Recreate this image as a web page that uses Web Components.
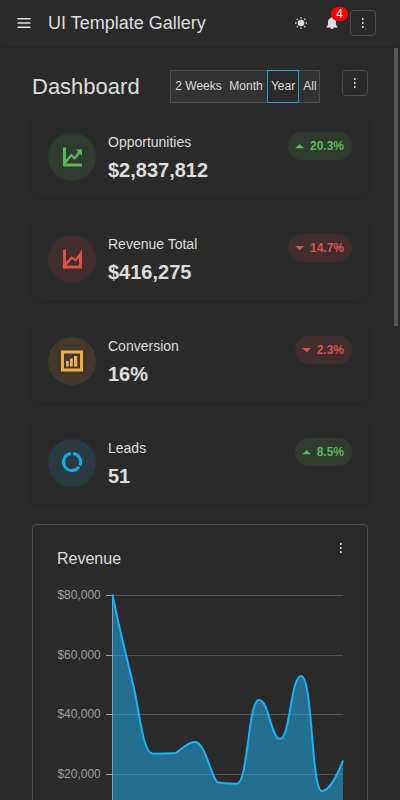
<!DOCTYPE html>
<html lang="en"><head><meta charset="utf-8"><title>UI Template Gallery</title>
<style>
html,body{margin:0;height:800px;overflow:hidden;background:#2a2a2a}
body{font-family:"Liberation Sans",Arial,sans-serif;color:#dedede;font-size:14px}
</style></head><body>
<gallery-app></gallery-app>
<script>
const define=(name,html,setup)=>customElements.define(name,class extends HTMLElement{
  connectedCallback(){
    if(this.shadowRoot)return;
    const root=this.attachShadow({mode:'open'});
    const t=document.createElement('template');
    t.innerHTML=html;
    root.append(t.content.cloneNode(true));
    if(setup)setup(this,root);
  }
});

define('more-button',`<style>
:host{display:flex;box-sizing:border-box;width:26px;height:26px;border:1px solid #4d4d4d;border-radius:4px;align-items:center;justify-content:center}
:host([plain]){border-color:transparent}
svg{display:block}
</style><svg width="2" height="10" fill="#dedede"><path d="M0 0h1v2H0zM0 4h1v2H0zM0 8h1v2H0z"/><path fill-opacity=".55" d="M1 0h1v2H1zM1 4h1v2H1zM1 8h1v2H1z"/></svg>`);

define('app-toolbar',`<style>
:host{display:flex;box-sizing:border-box;height:46px;padding:0 24px 0 17px;align-items:center;box-shadow:0 1px 4px rgba(0,0,0,.18);background:#2a2a2a}
svg{display:block}
h1{margin:0 0 0 17px;font-size:18px;font-weight:400;line-height:24px;flex:1;white-space:nowrap}
.sun{margin-right:17px}
.bell{position:relative;margin-right:11px}
.count{position:absolute;left:6px;top:-9px;width:17px;height:14px;border-radius:7px;background:#f00;color:#fff;font-size:12px;line-height:14px;text-align:center}
</style>
<svg width="14" height="14" fill="#dedede"><path d="M.5 2h13v1.500H.5zM.5 6.200h13v1.500H.5zM.5 10.400h13v1.500H.5z"/></svg>
<h1><slot></slot></h1>
<svg class="sun" width="14" height="14" viewBox="0 0 14 14"><circle cx="7" cy="7" r="3.300" fill="#dedede"/><g stroke="#dedede" stroke-width="1.300"><path d="M7 1v1.400M7 11.600V13M1 7h1.400M11.600 7H13M2.700 2.700l1 1M10.300 10.300l1 1M11.300 2.700l-1 1M3.700 10.300l-1 1"/></g></svg>
<div class="bell"><svg width="14" height="14" viewBox="0 0 14 14"><path fill="#dedede" d="M7 1a1 1 0 0 1 1 1c2 .6 3 2 3 4v3l1.500 1.800v.8h-11v-.8L3 9V6c0-2 1-3.400 3-4a1 1 0 0 1 1-1zM5.400 11h3.200v.4a1.600 1.600 0 0 1-3.200 0z"/></svg><span class="count">4</span></div>
<more-button></more-button>`);

define('period-tabs',`<style>
:host{display:flex;box-sizing:border-box;width:150px;height:33px;background:#323232;border:1px solid #4d4d4d;font-size:12px;line-height:31px}
span{text-align:center;white-space:nowrap}
.w{width:55px}.m{width:40px;padding-right:1px}.a{flex:1;padding-left:2px}
.y{box-sizing:border-box;width:32px;margin:-1px 0;border:1px solid #1ca8dd;background:#2a2a2a}
</style><span class="w">2 Weeks</span><span class="m">Month</span><span class="y">Year</span><span class="a">All</span>`);

const icons={
up:'<path d="M3 2.500h3v16h16v3H3zM22 4.500v6.200l-2-2-5.200 6.200-3.400-3.200L6 18.500v-3.800l5.300-6.200 3.300 3.200 3.500-4.900-2.300-2.300z"/>',
down:'<path fill-rule="evenodd" d="M3 2.500v19h19v-19l-6.500 9.300-4-2.600L6 15V2.500zM6.500 18.500l5.500-6.500 4 3 3-4.300v7.800z"/>',
bars:'<path fill-rule="evenodd" d="M1 1.500h22v21H1zM4 4.500v15h16v-15zM6 12h2.800v5.500H6zM10 9.500h2.800v8H10zM14 7h3.300v10.500H14z"/>',
ring:'<g fill="none" stroke="currentColor" stroke-width="3"><path d="M13 2.600A8.500 8.500 0 0 1 20 14.500"/><path d="M11 2.600A8.500 8.500 0 1 0 19 15.900"/></g>'
};
define('metric-card',`<style>
:host{display:flex;box-sizing:border-box;height:82px;padding:16px;border-radius:8px;background:#2a2a2a;box-shadow:0 1px 5px rgba(0,0,0,.13);align-items:flex-start}
.icon{width:48px;height:48px;margin-top:1px;border-radius:50%;display:flex;align-items:center;justify-content:center;color:var(--c);background:var(--bg)}
.icon svg{display:block}
.text{flex:1;margin-left:12px}
.label{line-height:20px;font-size:14px}
.value{font-size:20px;line-height:28px;font-weight:700;margin-top:4px}
.pill{display:flex;box-sizing:border-box;height:28px;border-radius:14px;align-items:center;padding:0 8px 0 7px;font-size:12px;font-weight:700;color:var(--pc);background:var(--pb)}
.pill svg{margin-right:5px}
</style>
<div class="icon"><svg width="24" height="24" viewBox="0 0 24 24" fill="currentColor"></svg></div>
<div class="text"><div class="label"><slot name="label"></slot></div><div class="value"><slot name="value"></slot></div></div>
<div class="pill"><svg width="10" height="6" fill="currentColor"><path/></svg><slot name="change"></slot></div>`,(el,root)=>{
  const green=['#5cb85c','#2f3b2f'],red=['#d9534f','#402d2d'];
  const kind=el.getAttribute('icon');
  const pal={up:green,down:red,bars:['#f0ad4e','#41382b'],ring:['#1ca8dd','#293941']}[kind];
  const trend=el.getAttribute('trend'),p=trend==='up'?green:red;
  root.querySelector('.icon svg').innerHTML=icons[kind];
  root.querySelector('.pill path').setAttribute('d',trend==='up'?'M.2 5.300L4.700 1l4.500 4.300z':'M.2 1h9L4.700 5.300z');
  const s=el.style;
  s.setProperty('--c',pal[0]);s.setProperty('--bg',pal[1]);
  s.setProperty('--pc',p[0]);s.setProperty('--pb',p[1]);
});

define('revenue-chart',`<style>
:host{display:block;box-sizing:border-box;height:440px;border:1px solid #4d4d4d;border-radius:4px;padding:10px 13px 0 24px}
header{display:flex;height:48px}
h2{flex:1;margin:14px 0 0;font-size:16px;line-height:20px;font-weight:400}
svg{display:block}
text{font-size:12px;fill:#a0a0a0;text-anchor:end}
</style>
<header><h2><slot></slot></h2><more-button plain></more-button></header>
<svg width="287" height="340" viewBox="57 583 287 340">
<g stroke="#555" shape-rendering="crispEdges"><path d="M112 595.5h231M112 655.5h231M112 714.5h231M112 774.5h231M112 833.5h231"/></g>
<path stroke="#a0a0a0" shape-rendering="crispEdges" d="M106 595.5h6M106 655.5h6M106 714.5h6M106 774.5h6M106 833.5h6M112.5 595v239"/>
<text x="100.800" y="599">$80,000</text><text x="100.800" y="659">$60,000</text><text x="100.800" y="718">$40,000</text><text x="100.800" y="778">$20,000</text>
<path class="area" fill="#1db2f5" fill-opacity=".5"/><path class="line" fill="none" stroke="#1db2f5" stroke-width="2"/>
</svg>`,(el,root)=>{
  const curve='M112.500 594.500C119 628 126 654 133.500 686C140 715 143 753.700 153 753.700C161 753.700 168 753.600 175 753.100C180 752 186 742 195 742C205 742 210 773 217 782C223 783.500 231 783.600 237 783.700C248 783.700 248 700 259 700C269 700 271 739 280 739C290 739 291 676 301 676C313 676 311 791 322 791C328 791 336 779 343 760.500';
  root.querySelector('.line').setAttribute('d',curve);
  root.querySelector('.area').setAttribute('d',curve+'V834H112.5Z');
});

define('gallery-app',`<style>
:host{display:block;height:800px;overflow:hidden;position:relative}
main{padding:24px 32px 0}
.head{display:flex;align-items:flex-start;height:46px}
h2{flex:1;margin:3px 0 0;font-size:22px;line-height:28px;font-weight:400}
.head more-button{margin-left:22px}
.cards{display:grid;gap:20px;margin-bottom:20px}
.thumb{position:absolute;right:2px;top:48px;width:4px;height:278px;background:#585858}
</style>
<app-toolbar>UI Template Gallery</app-toolbar>
<main><div class="head"><h2>Dashboard</h2><period-tabs></period-tabs><more-button></more-button></div>
<div class="cards">
<metric-card icon="up" trend="up"><span slot="label">Opportunities</span><span slot="value">$2,837,812</span><span slot="change">20.3%</span></metric-card>
<metric-card icon="down" trend="down"><span slot="label">Revenue Total</span><span slot="value">$416,275</span><span slot="change">14.7%</span></metric-card>
<metric-card icon="bars" trend="down"><span slot="label">Conversion</span><span slot="value">16%</span><span slot="change">2.3%</span></metric-card>
<metric-card icon="ring" trend="up"><span slot="label">Leads</span><span slot="value">51</span><span slot="change">8.5%</span></metric-card>
</div><revenue-chart>Revenue</revenue-chart></main><div class="thumb"></div>`);
</script></body></html>
